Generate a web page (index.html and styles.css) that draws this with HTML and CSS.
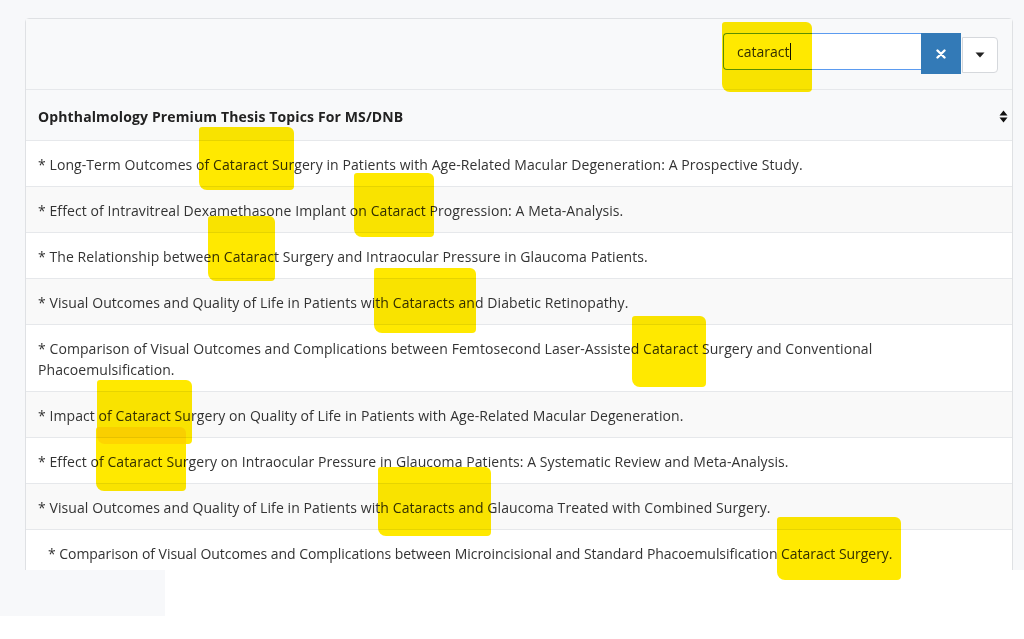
FILE: index.html
```html
<!DOCTYPE html>
<html lang="en">
<head>
<meta charset="utf-8">
<title>Ophthalmology Thesis Topics</title>
<link rel="stylesheet" href="styles.css">
</head>
<body>
<div class="page">
  <div class="viewport">
    <div class="card">
      <div class="toolbar">
        <div class="search">
          <div class="search-input"><span class="query">cataract</span><span class="caret"></span></div>
          <button class="btn-clear" type="button">
            <svg width="10" height="10" viewBox="0 0 10 10"><path d="M1.5 1.5 L8.5 8.5 M8.5 1.5 L1.5 8.5" stroke="#fff" stroke-width="2.4" stroke-linecap="round"/></svg>
          </button>
          <button class="btn-drop" type="button">
            <svg width="10" height="6" viewBox="0 0 10 6"><path d="M0.5 0.5 L9.5 0.5 L5 5.5 Z" fill="#222"/></svg>
          </button>
        </div>
      </div>
      <div class="table">
        <div class="thead">
          <span>Ophthalmology Premium Thesis Topics For MS/DNB</span>
          <svg class="sort" width="9" height="13" viewBox="0 0 9 13"><path d="M4.5 0.5 L8.5 5.5 L0.5 5.5 Z M0.5 7.5 L8.5 7.5 L4.5 12.5 Z" fill="#111"/></svg>
        </div>
        <div class="row">* Long-Term Outcomes of Cataract Surgery in Patients with Age-Related Macular Degeneration: A Prospective Study.</div>
        <div class="row alt">* Effect of Intravitreal Dexamethasone Implant on Cataract Progression: A Meta-Analysis.</div>
        <div class="row">* The Relationship between Cataract Surgery and Intraocular Pressure in Glaucoma Patients.</div>
        <div class="row alt">* Visual Outcomes and Quality of Life in Patients with Cataracts and Diabetic Retinopathy.</div>
        <div class="row">* Comparison of Visual Outcomes and Complications between Femtosecond Laser-Assisted Cataract Surgery and Conventional Phacoemulsification.</div>
        <div class="row alt">* Impact of Cataract Surgery on Quality of Life in Patients with Age-Related Macular Degeneration.</div>
        <div class="row">* Effect of Cataract Surgery on Intraocular Pressure in Glaucoma Patients: A Systematic Review and Meta-Analysis.</div>
        <div class="row alt">* Visual Outcomes and Quality of Life in Patients with Cataracts and Glaucoma Treated with Combined Surgery.</div>
        <div class="row last">* Comparison of Visual Outcomes and Complications between Microincisional and Standard Phacoemulsification Cataract Surgery.</div>
      </div>
    </div>
  </div>
  <div class="footer"><div class="footer-left"></div></div>

  <div class="marks">
    <div class="mark m0"></div>
    <div class="mark m1"></div>
    <div class="mark m2"></div>
    <div class="mark m3"></div>
    <div class="mark m4"></div>
    <div class="mark m5"></div>
    <div class="mark m6"></div>
    <div class="mark m7"></div>
    <div class="mark m8"></div>
    <div class="mark m9"></div>
  </div>
</div>
</body>
</html>
```

FILE: styles.css
```css
* { box-sizing: border-box; }
html, body { margin: 0; padding: 0; }
body {
  background: #ffffff;
  font-family: "Open Sans", "Noto Sans", "Liberation Sans", sans-serif;
  color: #333;
  font-size: 14px;
}
.page {
  position: relative;
  width: 1024px;
  height: 639px;
  overflow: hidden;
}
.viewport {
  height: 570px;
  overflow: hidden;
  background: #f7f8fa;
  padding: 18px 11px 0 25px;
}
.card {
  border: 1px solid #dfe1e4;
  border-radius: 4px;
  background: #fff;
}
.toolbar {
  height: 71px;
  background: #f8f9fa;
  border-bottom: 1px solid #e6e8eb;
  display: flex;
  justify-content: flex-end;
  align-items: flex-start;
  padding: 14px 14px 0 0;
}
.search {
  display: flex;
  align-items: flex-start;
}
.search-input {
  width: 198px;
  height: 37px;
  background: #fff;
  border: 1px solid #5b9bf0;
  border-right: none;
  border-radius: 4px 0 0 4px;
  padding: 0 0 0 13px;
  display: flex;
  align-items: center;
  font-size: 14px;
  color: #333;
}
.caret {
  display: inline-block;
  width: 1px;
  height: 17px;
  background: #111;
  margin-left: 1px;
}
.btn-clear {
  width: 40px;
  height: 41px;
  border: none;
  background: #337ab7;
  padding: 0;
  display: flex;
  align-items: center;
  justify-content: center;
}
.btn-drop {
  width: 36px;
  height: 36px;
  margin: 4px 0 0 1px;
  background: #fff;
  border: 1px solid #d5d8dc;
  border-radius: 0 4px 4px 0;
  padding: 0;
  display: flex;
  align-items: center;
  justify-content: center;
}
.thead {
  display: flex;
  align-items: center;
  justify-content: space-between;
  background: #f8f9fa;
  padding: 16px 4px 13px 12px;
  line-height: 21px;
  font-weight: 700;
  color: #222;
  letter-spacing: 0.13px;
  border-bottom: 1px solid #e6e8eb;
}
.row {
  padding: 13px 12px 11px;
  line-height: 21px;
  letter-spacing: 0.08px;
  border-bottom: 1px solid #e6e8eb;
  background: #fff;
}
.row.alt { background: #f9f9f9; }
.row.last {
  padding-left: 22px;
  letter-spacing: -0.04px;
}
.footer {
  height: 69px;
  background: #ffffff;
}
.footer-left {
  width: 165px;
  height: 46px;
  background: #f7f8fa;
}
.marks {
  position: absolute;
  inset: 0;
  pointer-events: none;
}
.mark {
  position: absolute;
  background: #ffe900;
  mix-blend-mode: multiply;
  border-radius: 3px 6px 4px 8px;
}
.m0 { left: 722px; top: 22px; width: 90px; height: 70px; }
.m1 { left: 199px; top: 127px; width: 95px; height: 63px; }
.m2 { left: 354px; top: 173px; width: 80px; height: 64px; }
.m3 { left: 208px; top: 216px; width: 67px; height: 65px; }
.m4 { left: 374px; top: 268px; width: 102px; height: 65px; }
.m5 { left: 632px; top: 316px; width: 74px; height: 71px; }
.m6 { left: 97px; top: 380px; width: 95px; height: 64px; }
.m7 { left: 96px; top: 427px; width: 90px; height: 64px; }
.m8 { left: 378px; top: 467px; width: 113px; height: 69px; }
.m9 { left: 777px; top: 517px; width: 124px; height: 63px; }
```
